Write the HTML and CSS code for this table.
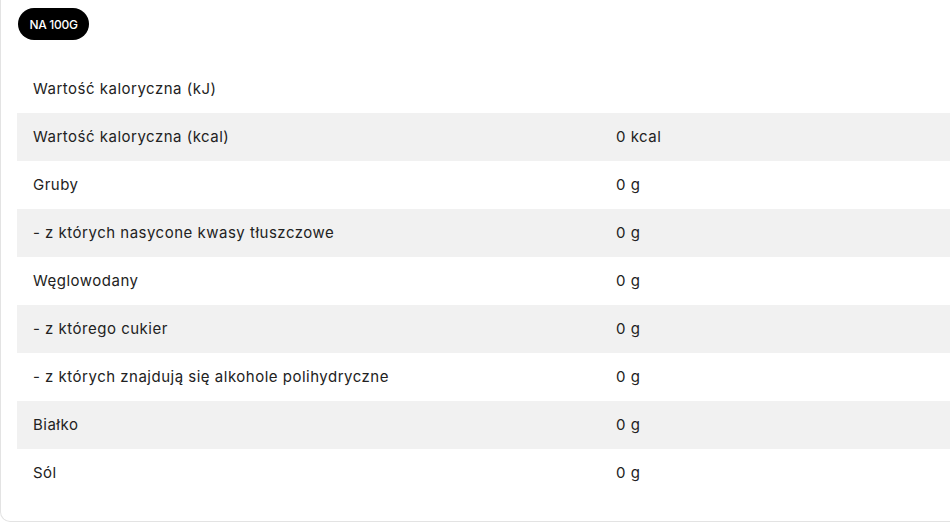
FILE: index.html
```html
<!DOCTYPE html>
<html lang="pl">
<head>
<meta charset="utf-8">
<link rel="stylesheet" href="styles.css">
</head>
<body>
<div class="card">
  <div class="badge">NA 100G</div>
  <table class="nutri">
    <tbody>
      <tr><td class="name">Wartość kaloryczna (kJ)</td><td class="val"></td></tr>
      <tr><td class="name">Wartość kaloryczna (kcal)</td><td class="val">0 kcal</td></tr>
      <tr><td class="name">Gruby</td><td class="val">0 g</td></tr>
      <tr><td class="name">- z których nasycone kwasy tłuszczowe</td><td class="val">0 g</td></tr>
      <tr><td class="name">Węglowodany</td><td class="val">0 g</td></tr>
      <tr><td class="name">- z którego cukier</td><td class="val">0 g</td></tr>
      <tr><td class="name">- z których znajdują się alkohole polihydryczne</td><td class="val">0 g</td></tr>
      <tr><td class="name">Białko</td><td class="val">0 g</td></tr>
      <tr><td class="name">Sól</td><td class="val">0 g</td></tr>
    </tbody>
  </table>
</div>
</body>
</html>
```

FILE: styles.css
```css
html, body {
  margin: 0;
  padding: 0;
  background: #fff;
}
body {
  font-family: Inter, "Noto Sans", sans-serif;
  color: #222;
}
.card {
  width: 950px;
  height: 522px;
  padding: 8px 0 24px 16px;
  border-left: 1px solid #e3e3e3;
  border-bottom: 1px solid #e3e3e3;
  border-bottom-left-radius: 10px;
  background: #fff;
  box-sizing: border-box;
}
.badge {
  display: inline-flex;
  align-items: center;
  justify-content: center;
  height: 32px;
  width: 71px;
  margin-left: 1px;
  background: #000;
  color: #fff;
  border-radius: 16px;
  font-size: 12px;
  font-weight: 500;
  letter-spacing: -0.3px;
}
.nutri {
  margin-top: 25px;
  width: 933px;
  border-collapse: collapse;
  font-size: 15px;
  letter-spacing: 0.5px;
}
.nutri tr {
  height: 48px;
}
.nutri tr:nth-child(even) {
  background: #f1f1f1;
}
.nutri td {
  padding: 0 16px 1px;
  vertical-align: middle;
}
.nutri td.name {
  width: 551px;
}
```
